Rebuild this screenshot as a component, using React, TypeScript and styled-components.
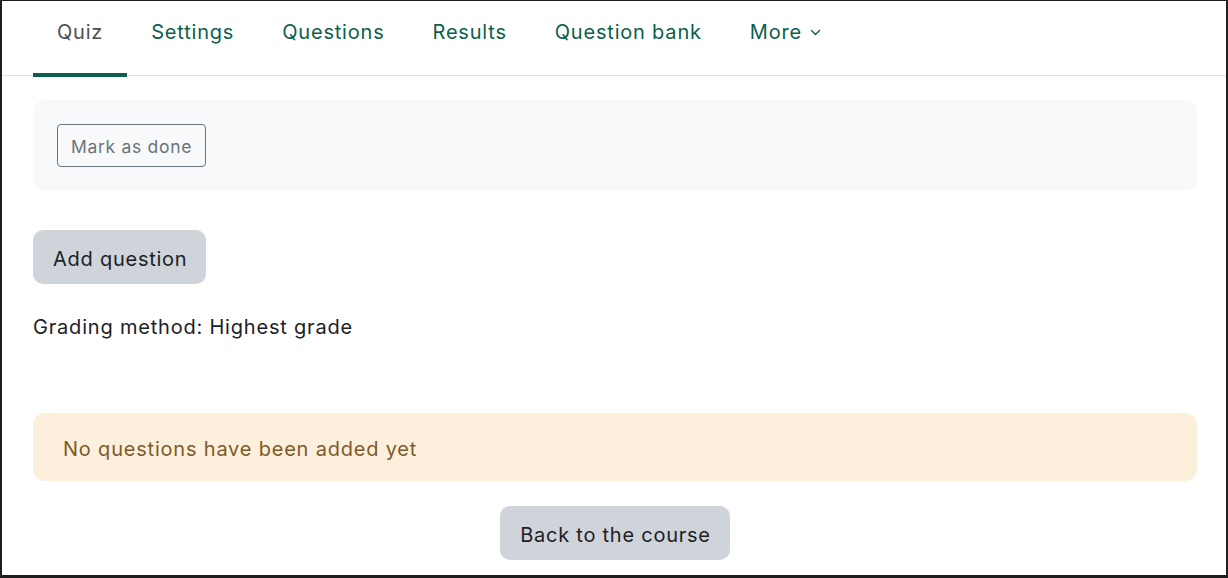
import React from "react";
import styled, { createGlobalStyle } from "styled-components";

const Global = createGlobalStyle`
  html, body { margin: 0; padding: 0; background: #fff; }
  body { font-family: Inter, "Noto Sans", sans-serif; color: #1d2125; letter-spacing: 0.8px; }
  * { box-sizing: border-box; }
`;

const Frame = styled.div`
  width: 1228px;
  height: 578px;
  border: 2px solid #1f1f1f;
  border-top-width: 1px;
  border-bottom-width: 3px;
  overflow: hidden;
  display: flex;
  flex-direction: column;
`;

const Nav = styled.nav`
  display: flex;
  padding-left: 31px;
  border-bottom: 1px solid #dee2e6;
  height: 75px;
`;

const Tab = styled.a<{ $active?: boolean }>`
  display: flex;
  align-items: flex-start;
  gap: 7px;
  height: 76px;
  margin-bottom: -1px;
  padding: 16px 24px 0;
  font-size: 20px;
  line-height: 30px;
  color: ${(p) => (p.$active ? "#4a5056" : "#0b5f4c")};
  border-bottom: 4px solid ${(p) => (p.$active ? "#0b5f4c" : "transparent")};
  text-decoration: none;
  cursor: pointer;
`;

const Chevron = styled.svg`
  margin-top: 11px;
  width: 13px;
  height: 9px;
`;

const Main = styled.main`
  display: flex;
  flex-direction: column;
  padding: 24px 29px 0 31px;
`;

const Card = styled.div`
  background: #f8f9fa;
  border-radius: 12px;
  padding: 24px;
  display: flex;
`;

const OutlineButton = styled.button`
  font-family: inherit;
  letter-spacing: 0.7px;
  font-size: 17.5px;
  line-height: 26px;
  padding: 8.5px 13px 6.5px;
  color: #6a737b;
  background: transparent;
  border: 1px solid #6a737b;
  border-radius: 4px;
`;

const GreyButton = styled.button<{ $center?: boolean }>`
  align-self: ${(p) => (p.$center ? "center" : "flex-start")};
  font-family: inherit;
  letter-spacing: 0.75px;
  font-size: 20px;
  line-height: 30px;
  padding: 13.5px 19px 10.5px 20px;
  color: #1d2125;
  background: #ced4da;
  border: none;
  border-radius: 10px;
`;

const Para = styled.p`
  margin: 27px 0 72px;
  padding-top: 1px;
  height: 30px;
  font-size: 20px;
  line-height: 30px;
`;

const Alert = styled.div`
  background: #fcefdc;
  color: #7d5a29;
  border-radius: 12px;
  padding: 21px 30px 17px;
  font-size: 20px;
  line-height: 30px;
  margin-bottom: 25px;
`;

const Spacer = styled.div`
  height: 39px;
`;

export default function App() {
  const tabs = ["Quiz", "Settings", "Questions", "Results", "Question bank"];
  return (
    <>
      <Global />
      <Frame>
        <Nav>
          {tabs.map((t, i) => (
            <Tab key={t} $active={i === 0}>
              {t}
            </Tab>
          ))}
          <Tab>
            More
            <Chevron viewBox="0 0 13 9" fill="none" stroke="#0b5f4c" strokeWidth="1.4" strokeLinecap="round" strokeLinejoin="round">
              <path d="M2.5 2.5l4 4 4-4" />
            </Chevron>
          </Tab>
        </Nav>
        <Main>
          <Card>
            <OutlineButton>Mark as done</OutlineButton>
          </Card>
          <Spacer />
          <GreyButton>Add question</GreyButton>
          <Para>Grading method: Highest grade</Para>
          <Alert>No questions have been added yet</Alert>
          <GreyButton $center>Back to the course</GreyButton>
        </Main>
      </Frame>
    </>
  );
}
